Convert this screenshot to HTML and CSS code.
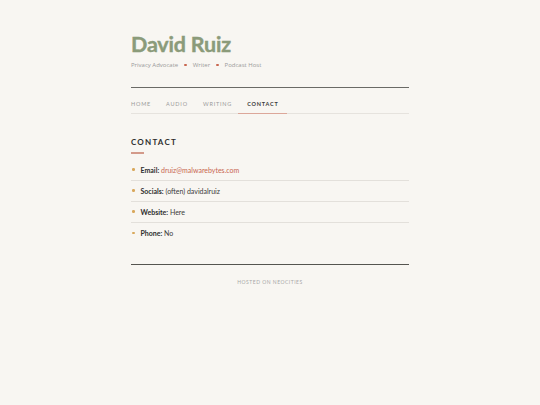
FILE: index.html
```html
<!DOCTYPE html>
<html>
<head>
<meta charset="utf-8">
<link rel="stylesheet" href="styles.css">
</head>
<body>
<div class="page">
  <header class="masthead">
    <h1 class="name">David Ruiz</h1>
    <p class="roles">
      <span>Privacy Advocate</span><span class="dot"></span><span>Writer</span><span class="dot"></span><span>Podcast Host</span>
    </p>
  </header>
  <nav class="nav">
    <a class="nav-link">HOME</a>
    <a class="nav-link">AUDIO</a>
    <a class="nav-link">WRITING</a>
    <a class="nav-link active">CONTACT</a>
  </nav>
  <main class="content">
    <h2 class="section-title">CONTACT</h2>
    <ul class="contact-list">
      <li class="item"><span class="bullet"></span><span class="label">Email:</span>&nbsp;<span class="link">druiz@malwarebytes.com</span></li>
      <li class="item"><span class="bullet"></span><span class="label">Socials:</span>&nbsp;(often) davidalruiz</li>
      <li class="item"><span class="bullet"></span><span class="label">Website:</span>&nbsp;Here</li>
      <li class="item"><span class="bullet"></span><span class="label">Phone:</span>&nbsp;No</li>
    </ul>
  </main>
  <footer class="footer">HOSTED ON NEOCITIES</footer>
</div>
</body>
</html>
```

FILE: styles.css
```css
* { box-sizing: border-box; }
html, body { margin: 0; padding: 0; }
body {
  background: #f8f6f2;
  font-family: "Lato", "Liberation Sans", sans-serif;
  font-weight: 400;
  color: #3a3a3a;
}
.page {
  width: 278px;
  margin: 0 auto;
  padding-top: 31px;
}
.name {
  margin: 0;
  font-size: 21.5px;
  line-height: 26px;
  font-weight: 700;
  color: #8b9b7a;
  letter-spacing: -0.2px;
  -webkit-text-stroke: 0.4px #8b9b7a;
}
.roles {
  margin: 3px 0 0;
  font-family: "Open Sans", "Lato", sans-serif;
  font-size: 6px;
  line-height: 10px;
  font-weight: 400;
  color: #9a9a9a;
  display: flex;
  align-items: center;
}
.dot {
  width: 2.5px;
  height: 2.5px;
  border-radius: 50%;
  background: #c8664f;
  margin: 0 6px;
}
.nav {
  margin-top: 17px;
  border-top: 1.5px solid #6a6a66;
  border-bottom: 1px solid #e6e3de;
  display: flex;
}
.nav-link {
  font-size: 5.5px;
  letter-spacing: 0.8px;
  color: #9a9a9a;
  padding: 13px 0 6px;
  margin-right: 15px;
  border-bottom: 1.5px solid transparent;
  margin-bottom: -1px;
}
.nav-link.active {
  color: #3a3a3a;
  font-weight: 700;
  padding-left: 9px;
  padding-right: 8px;
  margin-left: -9px;
  border-bottom-color: #dca79a;
}
.content {
  padding-top: 22px;
}
.section-title {
  margin: 0;
  font-size: 8px;
  line-height: 12px;
  font-weight: 700;
  letter-spacing: 1.2px;
  color: #2e2e2e;
}
.section-title::after {
  content: "";
  display: block;
  width: 13px;
  height: 1.5px;
  background: #d39a8a;
  margin-top: 4px;
}
.contact-list {
  list-style: none;
  margin: 6px 0 0;
  padding: 0;
}
.item {
  display: flex;
  align-items: center;
  font-size: 7px;
  height: 21px;
  border-bottom: 1px solid #e3e0db;
  color: #3a3a3a;
}
.item:last-child { border-bottom: none; }
.label { font-weight: 700; color: #2e2e2e; }
.bullet {
  width: 2.5px;
  height: 2.5px;
  border-radius: 50%;
  background: #d9a85c;
  margin: 0 6px 0 1px;
}
.link { color: #c8664f; }
.footer {
  margin-top: 20px;
  border-top: 1.5px solid #555550;
  padding-top: 14px;
  text-align: center;
  font-size: 5px;
  letter-spacing: 0.5px;
  color: #a8a8a8;
}
```
